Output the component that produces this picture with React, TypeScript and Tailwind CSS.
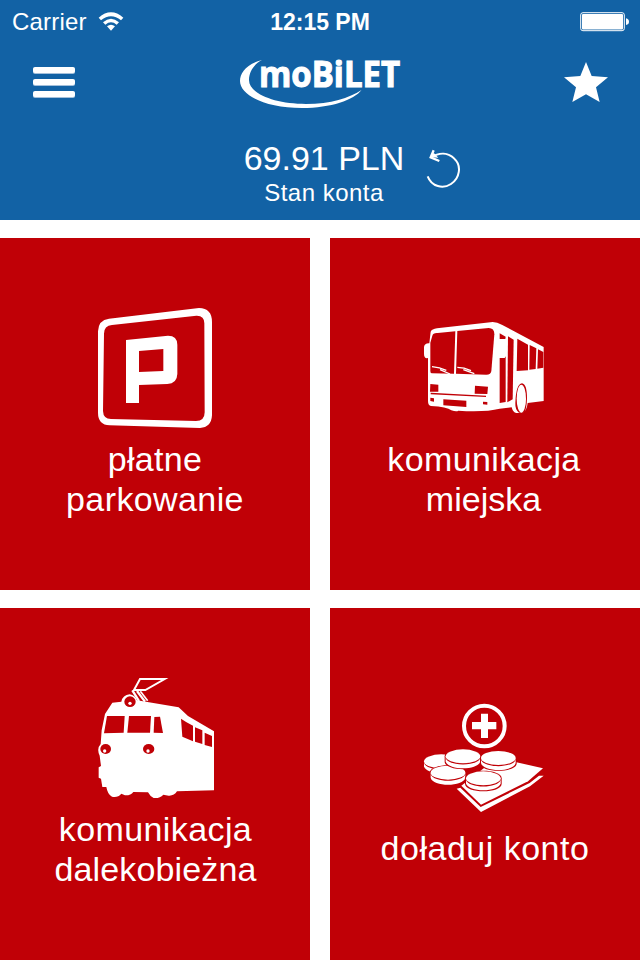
import React from "react"

const WifiIcon: React.FC = () => (
  <svg className="ml-[10px] h-[20px] w-[28px]" viewBox="0 0 84 60" fill="white">
    <path d="M5 17Q42-15 79 17L72 25Q42 0 12 25Z" />
    <path d="M18 31Q42 10 66 31L59 38Q42 24 25 38Z" />
    <path d="M30 43Q42 34 54 43L42 56Z" />
  </svg>
)

const BatteryIcon: React.FC = () => (
  <svg className="h-[20px] w-[50px]" viewBox="0 0 50 20">
    <rect x="0.7" y="0.7" width="43.6" height="18" rx="2.2" fill="none" stroke="white" strokeWidth="1" />
    <rect x="2" y="2" width="41" height="15.4" rx="1" fill="white" />
    <path d="M46 6.3Q49 7 49 9.7T46 13Z" fill="white" />
  </svg>
)

const Logo: React.FC = () => (
  <svg className="h-[65px] w-[180px] overflow-visible" viewBox="0 0 180 65" fill="white">
    <path d="M32 10C16 14 10 23 10 31C10 45 35 58 72 58C101 58 124 50 131.500 40C119 48 101 54 76 54C45 54 19 44 19 30C19 22 24 14 32 10Z" />
    <text
      x="29"
      y="37"
      textLength="141"
      lengthAdjust="spacingAndGlyphs"
      stroke="white"
      strokeWidth="1.1"
      className="font-['Open_Sans',sans-serif] text-[36.500px] leading-none font-bold"
    >
      moBiLET
    </text>
  </svg>
)

const RefreshIcon: React.FC = () => (
  <svg className="h-[42px] w-[40px]" viewBox="0 0 120 126" fill="none" stroke="white">
    <path d="M14 91C26 122 60 130 84 114C110 97 117 59 94 38C76 20 50 18 24 34" strokeWidth="6" />
    <path d="M32 13L23 34L49 45" strokeWidth="7" />
    <path d="M32 20L24 34L46 35Z" fill="white" stroke="none" />
  </svg>
)

const ParkingIcon: React.FC = () => (
  <svg className="h-[135px] w-[140px]" viewBox="0 0 420 405" fill="white" fillRule="evenodd">
    <path d="M72 56L342 24Q381 25 381 66V346Q379 382 345 384L74 376Q39 374 39 338V94Q40 60 72 56ZM81 75Q57 77 57 101L54 333Q55 357 78 357L333 363Q359 363 359 337L358 70Q358 46 334 47Z" />
    <path d="M123 120L249 107Q277 107 277 134V222Q276 251 247 252L162 255V309H123ZM162 153V216L235 213V147Z" />
  </svg>
)

const BusIcon: React.FC = () => (
  <svg className="h-[105px] w-[140px]" viewBox="0 0 420 315">
    <path
      d="M47 50Q51 42 66 40L233 21Q246 21 262 30L386 96V258L338 264Q335 293 318 294H304Q294 293 290 277L254 281Q210 292 130 287Q125 291 109 286Q96 275 48 273Q38 272 39 253V129Q27 132 27 116V96Q29 84 43 85Z"
      fill="white"
    />
    <g fill="#c00006">
      <path d="M52 62Q54 53 68 54L121 49L117 176L51 175Q46 176 46 168V83Z" />
      <path d="M127 48L221 39Q238 39 238 58L229 168Q228 179 214 179L123 176Z" />
      <path d="M254 55L272 65L271 72H254ZM254 129H269L272 124V261L254 264Z" />
      <path d="M279 64L296 74L293 253L277 262Z" />
      <path d="M307 71L339 89V166L305 168ZM344 90L364 100L362 162L343 164ZM369 103L385 111V158L367 161Z" />
      <path d="M46 207L70 209V230H45ZM180 212L219 215L217 237L179 236ZM85 253L154 257V276L85 271ZM46 248L57 250V260L46 258ZM204 260L217 261V269L204 268Z" />
      <path d="M47 233L213 242V246L47 238Z" />
      <path d="M301 264Q303 207 321 205Q336 207 336 250Q335 283 328 293H312Q300 284 301 264Z" />
    </g>
    <ellipse cx="319" cy="251" rx="14" ry="42" fill="white" />
    <path
      d="M51 155Q74 157 94 166M75 164L105 177M127 157Q147 157 168 167M145 164L178 176"
      fill="none"
      stroke="white"
      strokeWidth="4"
    />
  </svg>
)

const TrainIcon: React.FC = () => (
  <svg className="h-[135px] w-[140px]" viewBox="0 0 420 405">
    <path
      d="M82 98L109 95Q113 75 134 73Q151 76 156 91L281 112L309 138L387 184V361L276 364Q267 378 251 377L235 374Q224 386 206 384Q195 379 189 367L145 366Q137 377 120 376L109 371Q98 384 81 380Q68 374 64 351H52L48 326L41 323V292L48 288L44 257Q34 236 47 222L50 181L60 132Z"
      fill="white"
    />
    <g fill="none" stroke="white">
      <path d="M165 27H239L181 60L147 60Z" strokeWidth="6" />
      <path d="M142 61L162 93M156 63L180 95" strokeWidth="7" />
      <path d="M166 64L188 92" strokeWidth="5" />
    </g>
    <g fill="#c00006">
      <path d="M66 138H119L116 188L57 190Z" />
      <path d="M132 138H198L195 188H127Z" />
      <path d="M208 141L225 140L234 189L206 188Z" />
      <path d="M288 146Q302 156 324 167V214L292 200ZM330 172L352 181V222L330 215ZM359 188L381 198V231L359 225Z" />
      <ellipse cx="135" cy="95" rx="17" ry="16" />
      <ellipse cx="62" cy="237" rx="16" ry="15" />
      <ellipse cx="191" cy="237" rx="17" ry="15" />
    </g>
    <g fill="white">
      <circle cx="135" cy="100" r="5" />
      <circle cx="59" cy="243" r="5" />
      <circle cx="189" cy="243" r="5" />
    </g>
  </svg>
)

// back to front
const coins = [
  { x: 79, y: 199 },
  { x: 99, y: 233 },
  { x: 144, y: 184 },
  { x: 250, y: 189 },
  { x: 205, y: 250 },
]

const TopUpIcon: React.FC = () => (
  <svg className="h-[125px] w-[140px]" viewBox="0 0 420 375" fill="white">
    <circle cx="208" cy="93" r="61" fill="none" stroke="white" strokeWidth="12" />
    <path d="M198 56H219V81H244V103H219V129H198V103H171V81H198Z" />
    <path d="M301 201L384 220L339 259L198 329L139 272L210 217Z" />
    <path d="M125 281L136 278L197 336L344 264L372 242H386L345 274L198 351Z" />
    {coins.map((coin, index) => (
      <g key={index} transform={`translate(${coin.x} ${coin.y})`}>
        <path d="M-55 0C-55-30 55-30 55 0V16C55 46-55 46-55 16Z" fill="#c00006" />
        <path d="M-52 0V15C-46 43 46 43 52 15V0Z" />
        <path d="M-52 5C-44 31 44 31 52 5V0H-52Z" fill="#c00006" />
        <ellipse rx="52" ry="21" />
      </g>
    ))}
  </svg>
)

const tiles = [
  {
    icon: <ParkingIcon />,
    padding: "pt-[62px]",
    gap: "mt-[4px]",
    lines: [
      { text: "płatne", tracking: "tracking-[0.3px]" },
      { text: "parkowanie", tracking: "tracking-[0.4px]" },
    ],
  },
  {
    icon: <BusIcon />,
    padding: "pt-[77px]",
    gap: "mt-[19px]",
    lines: [
      { text: "komunikacja", tracking: "tracking-[0.4px] -ml-[2px]" },
      { text: "miejska", tracking: "tracking-[0px] -ml-[3px]" },
    ],
  },
  {
    icon: <TrainIcon />,
    padding: "pt-[62px]",
    gap: "mt-[4px]",
    lines: [
      { text: "komunikacja", tracking: "tracking-[0.4px] ml-[1px]" },
      { text: "dalekobieżna", tracking: "tracking-[0.15px] ml-[1px]" },
    ],
  },
  {
    icon: <TopUpIcon />,
    padding: "pt-[87px]",
    gap: "mt-[8px]",
    lines: [{ text: "doładuj konto", tracking: "tracking-[0.5px]" }],
  },
]

const App: React.FC = () => {
  return (
    <div className="flex h-[960px] w-[640px] flex-col overflow-hidden bg-white font-['Liberation_Sans',sans-serif] text-white">
      <header className="h-[220px] shrink-0 bg-[#1262a5]">
        <div className="grid h-10 grid-cols-3 items-center pr-[10px] pl-[12px] leading-[40px]">
          <div className="flex items-center pt-[2px] text-[24px] tracking-[0.2px]">
            Carrier
            <WifiIcon />
          </div>
          <div className="pt-[2px] pr-[2px] text-center text-[23px] font-bold">12:15 PM</div>
          <div className="flex justify-end pt-px">
            <BatteryIcon />
          </div>
        </div>

        <div className="mt-[10px] flex h-[65px] items-center justify-between pr-[32px] pl-[33px]">
          <button className="flex w-[43px] flex-col gap-[6px] pb-[2px]" aria-label="Menu">
            <span className="h-[6px] w-[42px] rounded-[2px] bg-white shadow-[0_1px_0_#a4c0db]" />
            <span className="h-[6px] w-[42px] rounded-[2px] bg-white shadow-[0_1px_0_#a4c0db]" />
            <span className="h-[6px] w-[42px] rounded-[2px] bg-white shadow-[0_1px_0_#a4c0db]" />
          </button>
          <Logo />
          <svg className="mb-[2px] h-[40px] w-[44px]" viewBox="0 0 132 120" fill="white">
            <path d="M66 0L83 42L132 46L96 76L107 120L66 97L25 120L36 76L0 46L49 42Z" />
          </svg>
        </div>

        <div className="mt-[23px] flex pl-[243px]">
          <div className="w-[162px] text-center whitespace-nowrap">
            <p className="text-[34px] leading-[40px]">69.91 PLN</p>
            <p className="text-[24px] leading-[30px] tracking-[0.5px]">Stan konta</p>
          </div>
          <button className="mt-[8px] ml-[18px] h-[42px]" aria-label="Odśwież">
            <RefreshIcon />
          </button>
        </div>
      </header>

      <main className="mt-[18px] grid grid-cols-[310px_310px] grid-rows-[352px_352px] gap-x-5 gap-y-[18px]">
        {tiles.map((tile, index) => (
          <button key={index} className={`flex flex-col items-center justify-start bg-[#c00006] ${tile.padding}`}>
            {tile.icon}
            <span className={`flex flex-col text-[34px] leading-[40px] ${tile.gap}`}>
              {tile.lines.map((line) => (
                <span key={line.text} className={line.tracking}>
                  {line.text}
                </span>
              ))}
            </span>
          </button>
        ))}
      </main>
    </div>
  )
}

export default App
